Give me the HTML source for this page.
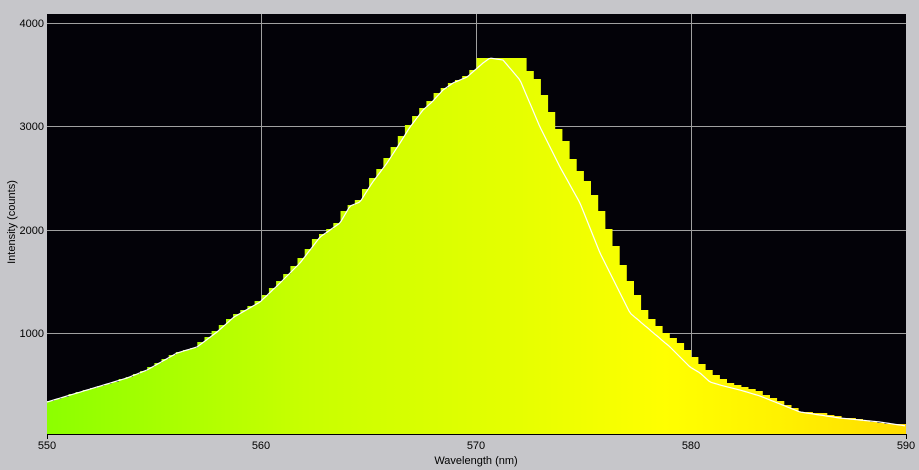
<!DOCTYPE html>
<html><head><meta charset="utf-8"><style>
html,body{margin:0;padding:0;background:#c6c6ca;}
svg{display:block;font-family:"Liberation Sans",sans-serif;}
</style></head><body>
<svg id="s" width="919" height="470" xmlns="http://www.w3.org/2000/svg">
<defs><linearGradient id="g" x1="47" x2="906" y1="0" y2="0" gradientUnits="userSpaceOnUse">
<stop offset="0" stop-color="#8cff00"/><stop offset="0.3" stop-color="#c8ff00"/><stop offset="0.55" stop-color="#e6ff00"/><stop offset="0.72" stop-color="#ffff00"/><stop offset="0.85" stop-color="#fff200"/><stop offset="1" stop-color="#ffdc00"/></linearGradient></defs>
<rect x="0" y="0" width="919" height="470" fill="#c6c6ca"/>
<rect x="47" y="14" width="859" height="420" fill="#030208"/>
<g stroke="#a0a0a0" stroke-width="1">
<line x1="261.5" y1="14" x2="261.5" y2="434"/><line x1="476.5" y1="14" x2="476.5" y2="434"/><line x1="691.5" y1="14" x2="691.5" y2="434"/>
<line x1="47" y1="23.5" x2="906" y2="23.5"/><line x1="47" y1="126.5" x2="906" y2="126.5"/><line x1="47" y1="230.5" x2="906" y2="230.5"/><line x1="47" y1="333.5" x2="906" y2="333.5"/>
</g>
<path id="bars" fill="url(#g)"/>
<polyline id="wl" fill="none" stroke="#fff" stroke-width="1.2"/>
<line x1="47" y1="434.5" x2="906" y2="434.5" stroke="#000"/>
<line x1="47.5" y1="434" x2="47.5" y2="439" stroke="#000"/>
<line x1="906.5" y1="434" x2="906.5" y2="439" stroke="#000"/>
<g font-size="11" fill="#000" text-anchor="end">
<text x="44" y="27">4000</text><text x="44" y="130">3000</text><text x="44" y="234">2000</text><text x="44" y="337">1000</text>
</g>
<g font-size="11" fill="#000" text-anchor="middle">
<text x="47" y="449">550</text><text x="261" y="449">560</text><text x="476" y="449">570</text><text x="691" y="449">580</text><text x="906" y="449">590</text>
<text x="476" y="464">Wavelength (nm)</text>
<text transform="translate(15,222) rotate(-90)">Intensity (counts)</text>
</g>
</svg>
<script>
var wl=[[47,402],[87,390],[127,378],[147,370],[177,353],[197,347],[217,332],[234,317],[260,302],[280,283],[290,273],[300,263],[320,237],[340,223],[350,206],[360,202],[372,183],[387,163],[400,143],[410,127],[423,110],[432,102],[443,90],[453,83],[467,77],[483,63],[490,58],[503,60],[520,80],[540,127],[560,167],[580,203],[600,253],[620,293],[630,313],[650,330],[670,347],[690,367],[700,373],[710,382],[720,385],[740,390],[760,396],[780,404],[800,412],[820,415],[840,418],[860,420],[880,422],[906,426]];
var br=[[477,58],[525,71],[532,79],[539,95],[547,112],[554,129],[560,141],[567,159],[574,171],[583,181],[590,195],[597,211],[605,229],[612,246],[619,265],[627,281],[634,295],[641,310],[648,319],[655,326],[662,333],[670,338],[677,343],[684,350],[692,357],[699,364],[706,370],[713,375],[720,379],[727,383],[735,385],[742,387],[750,389],[757,391],[764,395],[771,398],[778,401],[786,405],[793,408],[800,412],[815,413],[829,415],[836,416],[843,418],[857,419],[864,421],[871,422],[878,423],[885,424],[906,425]];
function f(p,x){if(x<=p[0][0])return p[0][1];for(var i=1;i<p.length;i++){if(x<=p[i][0]){var a=p[i-1],b=p[i];return a[1]+(b[1]-a[1])*(x-a[0])/(b[0]-a[0]);}}return p[p.length-1][1];}
function step(x){var y=br[0][1];for(var i=0;i<br.length;i++){if(br[i][0]<=x+0.5)y=br[i][1];}return y;}
var d="M47 434",w=859/120;
for(var i=0;i<120;i++){var x0=47+i*w,x1=x0+w,y;
 if(x1<=478)y=Math.round(f(wl,x1)+1);else y=step(x0+w/2);
 d+=" L"+x0.toFixed(1)+" "+y+" L"+x1.toFixed(1)+" "+y;}
d+=" L906 434 Z";document.getElementById("bars").setAttribute("d",d);
var pts=[];for(var x=47;x<=906;x+=2)pts.push(x+","+f(wl,x).toFixed(1));
document.getElementById("wl").setAttribute("points",pts.join(" "));
</script>
</body></html>
